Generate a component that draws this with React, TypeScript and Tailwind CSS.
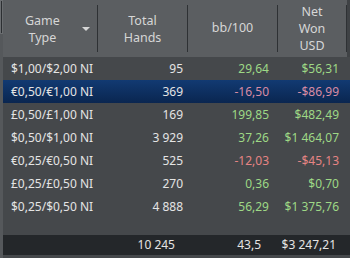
import React from 'react';

interface Row {
  game: string;
  hands: string;
  bb: string;
  net: string;
  up: boolean;
}

const rows: Row[] = [
  { game: '$1,00/$2,00 NI', hands: '95', bb: '29,64', net: '$56,31', up: true },
  { game: '€0,50/€1,00 NI', hands: '369', bb: '-16,50', net: '-$86,99', up: false },
  { game: '£0,50/£1,00 NI', hands: '169', bb: '199,85', net: '$482,49', up: true },
  { game: '$0,50/$1,00 NI', hands: '3 929', bb: '37,26', net: '$1 464,07', up: true },
  { game: '€0,25/€0,50 NI', hands: '525', bb: '-12,03', net: '-$45,13', up: false },
  { game: '£0,25/£0,50 NI', hands: '270', bb: '0,36', net: '$0,70', up: true },
  { game: '$0,25/$0,50 NI', hands: '4 888', bb: '56,29', net: '$1 375,76', up: true },
];

export default function App() {
  return (
    <div
      className="w-[350px] h-[258px] overflow-hidden bg-[#45484b] flex text-[12px] leading-none"
      style={{ fontFamily: '"Noto Sans", "Open Sans", sans-serif' }}
    >
      {/* left edge strip */}
      <div className="w-[3px] flex flex-col bg-[#55585b]">
        <div className="h-[34px] bg-[#2c2f32] border border-[#6a6d70]" />
      </div>

      <div className="flex-1 flex flex-col">
        {/* Header */}
        <div className="h-[57px] flex bg-[#5b5e61] text-[#d6d6d6] text-[12.5px]">
          <div className="w-[94px] flex items-center pl-[22px] relative">
            <div className="text-center leading-[17px]">Game<br />Type</div>
            <svg className="absolute left-[79px] top-[27px]" width="8" height="5" viewBox="0 0 8 5">
              <path d="M0 0h8L4 4z" fill="#d6d6d6" />
            </svg>
          </div>
          <div className="w-px my-[5px] bg-[#2e3134]" />
          <div className="w-[89px] flex items-center justify-center leading-[17px] text-center">
            Total<br />Hands
          </div>
          <div className="w-px my-[5px] bg-[#2e3134]" />
          <div className="w-[89px] flex items-center justify-center">bb/100</div>
          <div className="w-px my-[5px] bg-[#2e3134]" />
          <div className="w-[68px] flex items-center justify-center leading-[17px] text-center">
            Net<br />Won<br />USD
          </div>
          <div className="w-px my-[5px] bg-[#2e3134]" />
          <div className="flex-1 bg-[#3f4245]" />
        </div>

        {/* Body */}
        <div className="flex-1 flex flex-col">
          {rows.map((r, i) => (
            <div
              key={i}
              className={`h-[23px] flex items-center ${
                i === 1 ? 'bg-gradient-to-b from-[#123a72] to-[#0a2650]' : ''
              }`}
            >
              <div className="w-[94px] pl-[8px] text-[#e4e4e4]">{r.game}</div>
              <div className="w-[90px] pr-[4px] text-right text-[#e4e4e4]">{r.hands}</div>
              <div
                className={`w-[90px] pr-[8px] text-right ${
                  r.up ? 'text-[#9ed886]' : i === 1 ? 'text-[#d98ca4]' : 'text-[#e58484]'
                }`}
              >
                {r.bb}
              </div>
              <div
                className={`w-[69px] pr-[7px] text-right ${
                  r.up ? 'text-[#9ed886]' : i === 1 ? 'text-[#d98ca4]' : 'text-[#e58484]'
                }`}
              >
                {r.net}
              </div>
            </div>
          ))}
        </div>

        {/* Footer totals */}
        <div className="h-[20px] mb-[3px] flex items-center bg-[#24272a] text-[#e4e4e4]">
          <div className="w-[94px]" />
          <div className="w-[90px] pr-[12px] text-right">10 245</div>
          <div className="w-[90px] pr-[16px] text-right">43,5</div>
          <div className="w-[69px] pr-[10px] text-right">$3 247,21</div>
        </div>
      </div>
    </div>
  );
}
